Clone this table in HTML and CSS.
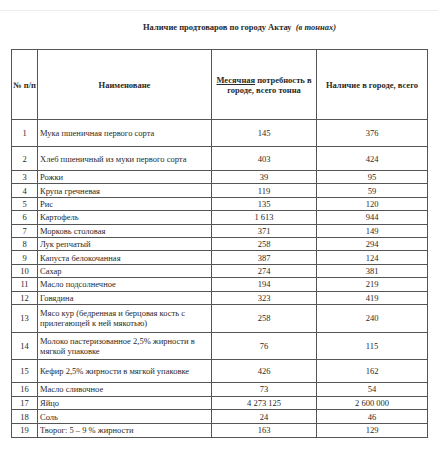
FILE: index.html
```html
<!DOCTYPE html>
<html lang="ru">
<head>
<meta charset="utf-8">
<link rel="stylesheet" href="styles.css">
</head>
<body>
<div class="topbar"></div>
<div class="title">Наличие продтоваров по городу Актау&nbsp; <i>(в тоннах)</i></div>
<table class="tbl">
  <colgroup>
    <col class="c1"><col class="c2"><col class="c3"><col class="c4">
  </colgroup>
  <tr class="head">
    <th>№ п/п</th>
    <th>Наименоване</th>
    <th><span class="ul">Месячная</span>потребность в<br>городе, всего тонна</th>
    <th>Наличие в городе, всего</th>
  </tr>
  <tr class="r27"><td>1</td><td class="name">Мука пшеничная первого сорта</td><td>145</td><td>376</td></tr>
  <tr class="r24"><td>2</td><td class="name">Хлеб пшеничный из муки первого сорта</td><td>403</td><td>424</td></tr>
  <tr class="rs"><td>3</td><td class="name">Рожки</td><td>39</td><td>95</td></tr>
  <tr class="rs"><td>4</td><td class="name">Крупа гречневая</td><td>119</td><td>59</td></tr>
  <tr class="rs"><td>5</td><td class="name">Рис</td><td>135</td><td>120</td></tr>
  <tr class="rs"><td>6</td><td class="name">Картофель</td><td>1 613</td><td>944</td></tr>
  <tr class="rs"><td>7</td><td class="name">Морковь столовая</td><td>371</td><td>149</td></tr>
  <tr class="rs"><td>8</td><td class="name">Лук репчатый</td><td>258</td><td>294</td></tr>
  <tr class="rs"><td>9</td><td class="name">Капуста белокочанная</td><td>387</td><td>124</td></tr>
  <tr class="rs"><td>10</td><td class="name">Сахар</td><td>274</td><td>381</td></tr>
  <tr class="rs"><td>11</td><td class="name">Масло подсолнечное</td><td>194</td><td>219</td></tr>
  <tr class="rs"><td>12</td><td class="name">Говядина</td><td>323</td><td>419</td></tr>
  <tr class="r28"><td>13</td><td class="name">Мясо кур (бедренная и берцовая кость с прилегающей к ней мякотью)</td><td>258</td><td>240</td></tr>
  <tr class="r27b"><td>14</td><td class="name">Молоко пастеризованное 2,5% жирности в мягкой упаковке</td><td>76</td><td>115</td></tr>
  <tr class="r23"><td>15</td><td class="name">Кефир 2,5% жирности в мягкой упаковке</td><td>426</td><td>162</td></tr>
  <tr class="rs2"><td>16</td><td class="name">Масло сливочное</td><td>73</td><td>54</td></tr>
  <tr class="rs2"><td>17</td><td class="name">Яйцо</td><td>4 273 125</td><td>2 600 000</td></tr>
  <tr class="rs2"><td>18</td><td class="name">Соль</td><td>24</td><td>46</td></tr>
  <tr class="rs2"><td>19</td><td class="name">Творог: 5 – 9 % жирности</td><td>163</td><td>129</td></tr>
</table>
</body>
</html>
```
FILE: styles.css
```css
html, body {
  margin: 0;
  padding: 0;
  background: #fff;
}
body {
  width: 438px;
  height: 450px;
  overflow: hidden;
  font-family: "Liberation Serif", "Times New Roman", serif;
  color: #2a2a2a;
}
.topbar {
  height: 10px;
  border-bottom: 1px solid #ececec;
}
.title {
  margin-top: 11px;
  padding-left: 143px;
  font-size: 8.5px;
  font-weight: bold;
  line-height: 10px;
  height: 27px;
}
.tbl {
  margin-left: 11px;
  width: 417px;
  border-collapse: collapse;
  table-layout: fixed;
  font-size: 8.5px;
  line-height: 10px;
}
.c1 { width: 26px; }
.c2 { width: 174px; }
.c3 { width: 105px; }
.c4 { width: 111px; }
.tbl th, .tbl td {
  border: 1px solid #555;
  padding: 0 2px;
  text-align: center;
  vertical-align: middle;
}
.tbl th {
  font-weight: bold;
}
.ul {
  text-decoration: underline;
  padding-right: 2px;
}
.tbl td.name {
  text-align: left;
  padding-left: 2px;
}
.head { height: 70px; }
.head th:first-child { padding: 0; }
.r27 { height: 27px; }
.r24 { height: 24px; }
.rs { height: 13.4px; }
.r28 { height: 27.7px; }
.r27b { height: 27.3px; }
.r23 { height: 23.3px; }
.rs2 { height: 13.6px; }
```
